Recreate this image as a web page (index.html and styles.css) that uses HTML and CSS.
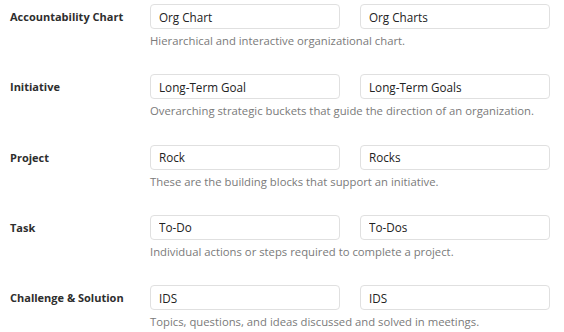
FILE: index.html
```html
<!DOCTYPE html>
<html lang="en">
<head>
  <meta charset="UTF-8">
  <title>Terminology</title>
  <meta name="viewport" content="width=device-width, initial-scale=1.0">
  <link rel="stylesheet" href="styles.css">
</head>
<body>

  <div class="terms">

    <div class="term-row">
      <div class="term-label">Accountability Chart</div>
      <div class="term-fields">
        <div class="term-inputs">
          <input type="text" class="term-input" value="Org Chart">
          <input type="text" class="term-input" value="Org Charts">
        </div>
        <p class="term-desc">Hierarchical and interactive organizational chart.</p>
      </div>
    </div>

    <div class="term-row">
      <div class="term-label">Initiative</div>
      <div class="term-fields">
        <div class="term-inputs">
          <input type="text" class="term-input" value="Long-Term Goal">
          <input type="text" class="term-input" value="Long-Term Goals">
        </div>
        <p class="term-desc">Overarching strategic buckets that guide the direction of an organization.</p>
      </div>
    </div>

    <div class="term-row">
      <div class="term-label">Project</div>
      <div class="term-fields">
        <div class="term-inputs">
          <input type="text" class="term-input" value="Rock">
          <input type="text" class="term-input" value="Rocks">
        </div>
        <p class="term-desc">These are the building blocks that support an initiative.</p>
      </div>
    </div>

    <div class="term-row">
      <div class="term-label">Task</div>
      <div class="term-fields">
        <div class="term-inputs">
          <input type="text" class="term-input" value="To-Do">
          <input type="text" class="term-input" value="To-Dos">
        </div>
        <p class="term-desc">Individual actions or steps required to complete a project.</p>
      </div>
    </div>

    <div class="term-row">
      <div class="term-label">Challenge &amp; Solution</div>
      <div class="term-fields">
        <div class="term-inputs">
          <input type="text" class="term-input" value="IDS">
          <input type="text" class="term-input" value="IDS">
        </div>
        <p class="term-desc">Topics, questions, and ideas discussed and solved in meetings.</p>
      </div>
    </div>

  </div>

</body>
</html>
```

FILE: styles.css
```css
body {
  margin: 0;
  background: white;
  font-family: "Open Sans", "DejaVu Sans", sans-serif;
  color: #333;
}

.terms {
  padding: 4px 0 0 10px;
}

.term-row {
  display: flex;
  height: 70.3px;
}

.term-row:last-child {
  height: auto;
}

.term-label {
  width: 140px;
  height: 25px;
  line-height: 25px;
  font-size: 11px;
  font-weight: 700;
  color: #2e2e2e;
}

.term-inputs {
  display: flex;
  gap: 20px;
}

.term-input {
  box-sizing: border-box;
  width: 190px;
  height: 25px;
  padding: 0 8px;
  border: 1px solid #e0e0e0;
  border-radius: 4px;
  font-family: inherit;
  font-size: 11.7px;
  color: #222;
  background: white;
}

.term-desc {
  margin: 4px 0 0;
  font-size: 11.3px;
  color: #7a7a7a;
}
```
